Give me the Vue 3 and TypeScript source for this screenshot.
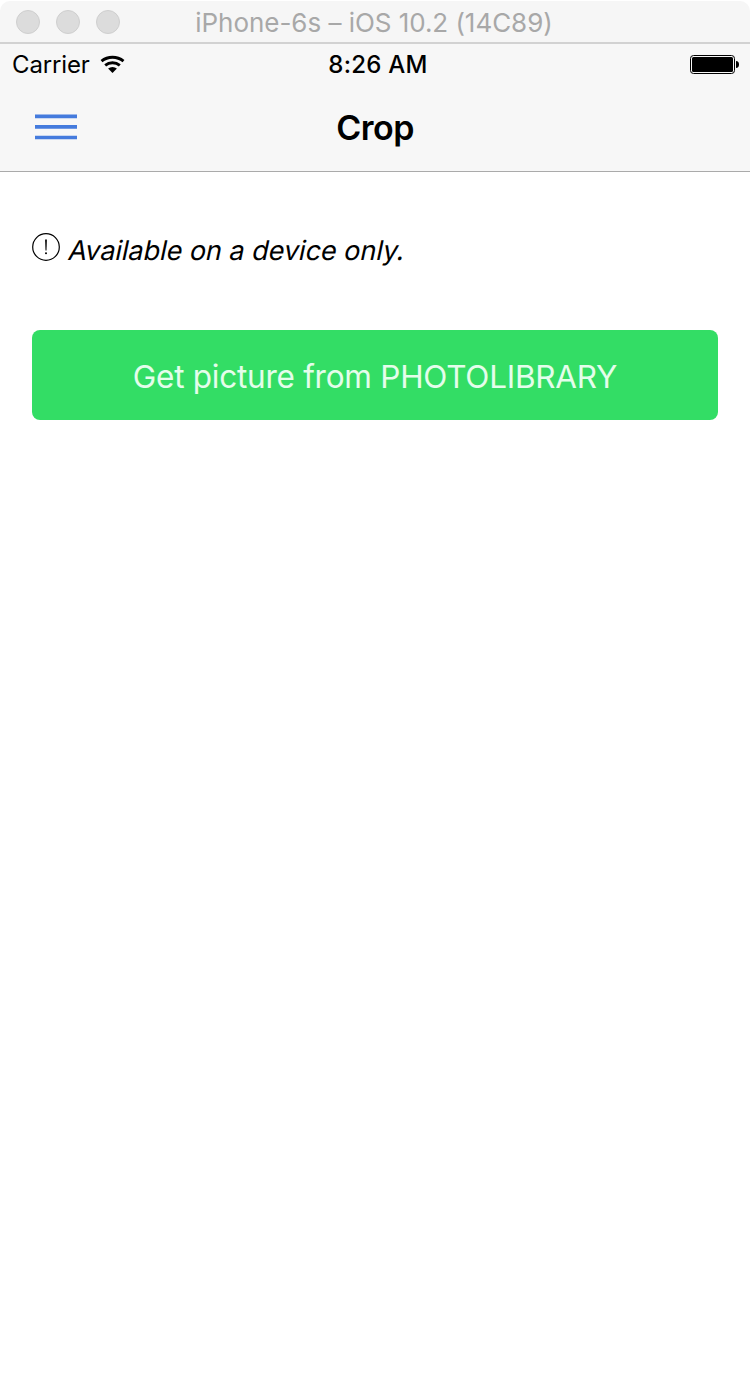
<script setup lang="ts">
const windowTitle = 'iPhone-6s – iOS 10.2 (14C89)'
const windowButtons: string[] = ['close', 'minimize', 'zoom']
</script>

<template>
  <div class="window">
    <header class="titlebar">
      <span v-for="name in windowButtons" :key="name" class="dot"></span>
      <span class="window-title"><span class="t-window">{{ windowTitle }}</span></span>
    </header>
    <div class="statusbar">
      <div class="carrier">
        <span class="t-carrier">Carrier</span>
        <svg class="wifi" width="26" height="20" viewBox="0 0 26 20">
          <g fill="none" stroke="#000" stroke-width="2.9">
            <path d="M1.5 6.1A17.5 17.5 0 0 1 23.5 6.1" />
            <path d="M5.2 10.3A11.5 11.5 0 0 1 19.8 10.3" />
          </g>
          <path d="M8.1 13.6A6.5 6.5 0 0 1 16.9 13.6L12.5 18Z" fill="#000" />
        </svg>
      </div>
      <span class="t-time">8:26 AM</span>
      <div class="power">
        <svg width="50" height="20" viewBox="0 0 50 20">
          <rect x="0.5" y="0.5" width="44" height="18" rx="3" fill="none" stroke="#000" />
          <rect x="2" y="2" width="41" height="15" rx="1.5" fill="#000" />
          <path d="M46 6Q49 6.4 49 9.5T46 13Z" fill="#000" />
        </svg>
      </div>
    </div>
    <nav class="navbar">
      <button class="menu" aria-label="Menu">
        <svg width="42" height="26" viewBox="0 0 42 26">
          <path d="M0 2.4H42M0 12.9H42M0 23.5H42" stroke="#457bdd" stroke-width="3.6" />
        </svg>
      </button>
      <h1><span class="t-crop">Crop</span></h1>
    </nav>
    <main>
      <p class="notice">
        <svg width="28" height="28" viewBox="0 0 28 28">
          <circle cx="14" cy="14" r="13.3" fill="none" stroke="#000" stroke-width="1.2" />
          <path d="M13.1 6.5H14.9L14.5 17.5H13.5Z" fill="#000" />
          <circle cx="14" cy="20.2" r="1" fill="#000" />
        </svg>
        <em class="t-notice">Available on a device only.</em>
      </p>
      <button class="action"><span class="t-action">Get picture from PHOTOLIBRARY</span></button>
    </main>
  </div>
</template>

<style>
body {
  background: #fff;
}
</style>

<style scoped>
.window {
  box-sizing: border-box;
  width: 750px;
  height: 1378px;
  padding-top: 1px;
  overflow: hidden;
  background: #fff;
  color: #000;
  font-family: Inter, 'Liberation Sans', sans-serif;
}
.window span,
.window em {
  white-space: nowrap;
}
.titlebar {
  box-sizing: border-box;
  display: grid;
  grid-template-columns: 24px 24px 24px 1fr 106px;
  column-gap: 16px;
  align-items: center;
  height: 43px;
  padding: 0 16px;
  background: #f6f6f6;
  border-bottom: 2px solid #d2d2d2;
  border-radius: 10px 10px 0 0;
}
.dot {
  box-sizing: border-box;
  width: 24px;
  height: 24px;
  margin-bottom: 2px;
  border: 1px solid #cfcfcf;
  border-radius: 50%;
  background: #dcdcdc;
}
.window-title {
  padding-top: 4px;
  text-align: center;
  line-height: 36px;
}
.t-window {
  font-size: 26px;
  letter-spacing: -0.04px;
  color: #a8a8a8;
}
.statusbar {
  display: grid;
  grid-template-columns: 1fr auto 1fr;
  align-items: center;
  height: 42px;
  padding: 0 10px 0 12px;
  background: #f7f7f7;
  font-size: 24px;
  line-height: 42px;
}
.carrier {
  display: flex;
  align-items: center;
  gap: 10px;
}
.t-carrier {
  letter-spacing: -0.15px;
}
.t-time {
  padding-left: 4px;
  font-weight: 500;
  letter-spacing: 0.25px;
}
.power {
  display: flex;
  justify-content: flex-end;
}
.navbar {
  box-sizing: border-box;
  display: grid;
  grid-template-columns: 42px 1fr 42px;
  align-items: center;
  height: 86px;
  padding: 0 35px 2px;
  background: #f7f7f7;
  border-bottom: 1px solid #aaa;
}
.menu {
  margin-bottom: 2px;
  padding: 0;
  border: 0;
  background: none;
}
.menu svg {
  display: block;
}
h1 {
  margin: 0;
  text-align: center;
  font-size: 34px;
  font-weight: 600;
  letter-spacing: -0.5px;
  line-height: 44px;
}
main {
  padding: 58px 32px 0;
}
.notice {
  display: flex;
  align-items: center;
  gap: 7px;
  height: 40px;
  margin: 0 0 60px;
  font-size: 27px;
  line-height: 40px;
}
.notice svg {
  margin-bottom: 6px;
}
.t-notice {
  padding-top: 2px;
  font-style: normal;
  letter-spacing: -0.03px;
  transform: skewX(-12deg);
  transform-origin: 0 75%;
}
.action {
  display: block;
  width: 686px;
  height: 90px;
  padding: 3px 0 0;
  border: 0;
  border-radius: 8px;
  background: #33dd65;
  color: #e4fdeb;
  font-family: inherit;
  font-size: 31.5px;
  font-weight: 400;
  letter-spacing: -0.25px;
  line-height: 87px;
}
</style>
